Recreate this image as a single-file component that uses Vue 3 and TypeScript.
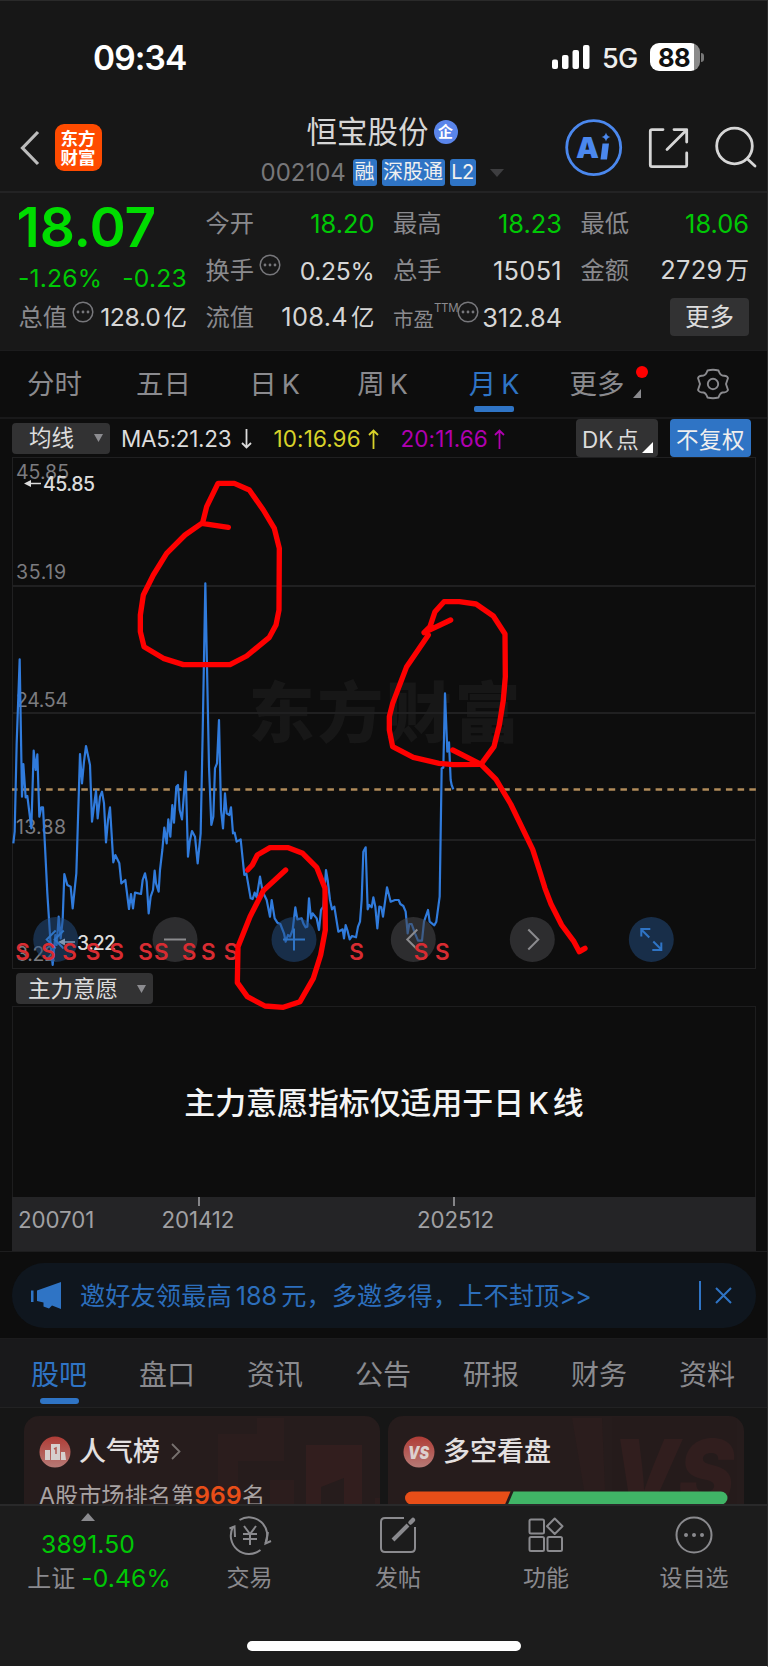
<script setup lang="ts">
interface Quote {
  label: string
  value: string
  unit?: string
  up?: boolean
  info?: boolean
  small?: boolean
  tight?: boolean
  sup?: string
}

const rows: Quote[][] = [
  [
    { label: '今开', value: '18.20', up: true },
    { label: '最高', value: '18.23', up: true },
    { label: '最低', value: '18.06', up: true },
  ],
  [
    { label: '换手', value: '0.25%', info: true, tight: true },
    { label: '总手', value: '15051' },
    { label: '金额', value: '2729', unit: '万' },
  ],
]
const lastRow: Quote[] = [
  { label: '总值', value: '128.0', unit: '亿', info: true, tight: true },
  { label: '流值', value: '108.4', unit: '亿' },
  { label: '市盈', value: '312.84', info: true, small: true, sup: 'TTM' },
]

const grid = [586, 713, 840]
const axis = [
  { v: '45.85', y: 479, w: 53 },
  { v: '35.19', y: 579, w: 50 },
  { v: '24.54', y: 707, w: 52 },
  { v: '13.88', y: 834, w: 50 },
  { v: '3.22', y: 961, w: 40 },
]

// Series and pen strokes use third-of-a-pixel units with the origin at y = 700.
const price =
  '40,430 44,395 50,130 59,-122 66,290 70,192 77,292 82,288 94,385 101,152 107,210 112,163 118,350 124,322 129,322 135,440 142,580 152,735 158,795 166,705 170,735 176,650 182,715 188,660 193,522 202,555 212,560 218,625 229,520 240,162 246,250 252,185 258,138 270,195 276,365 288,272 293,355 300,290 306,275 312,310 318,427 324,360 330,322 340,487 346,465 358,490 364,550 376,540 387,627 393,582 399,625 405,578 423,582 428,540 435,520 440,545 446,640 452,590 459,570 464,512 468,550 476,575 480,510 487,450 493,383 500,430 505,358 511,410 517,315 522,368 529,260 534,255 539,330 546,358 557,215 564,470 569,425 576,393 585,410 593,490 602,400 608,100 616,-350 627,200 634,375 640,350 645,205 651,190 657,60 663,330 669,385 675,280 680,340 688,345 693,322 699,400 704,398 710,425 722,418 733,525 739,520 752,595 758,597 764,578 770,592 780,530 788,575 800,600 810,650 815,600 824,655 832,668 841,672 852,700 857,725 864,705 870,710 878,690 886,622 892,658 905,655 910,670 917,682 922,680 927,595 933,655 938,640 950,655 957,690 963,630 970,620 978,510 983,540 990,600 996,628 1003,620 1015,695 1028,688 1032,715 1037,675 1042,690 1049,718 1056,708 1068,712 1074,680 1080,665 1085,600 1090,455 1097,442 1103,628 1108,615 1115,622 1120,592 1126,620 1132,685 1138,620 1144,622 1149,650 1161,562 1172,605 1185,600 1196,600 1201,612 1210,618 1217,635 1223,700 1228,672 1235,672 1245,700 1254,722 1266,722 1272,665 1284,630 1289,665 1303,676 1309,665 1319,590 1322,400 1325,205 1330,203 1335,-20 1342,155 1347,127 1352,240 1355,255 1360,268'

const strokes = [
  '685,-518 605,-530 555,-495 500,-440 460,-375 430,-315 421,-255 421,-205 432,-160 490,-125 550,-106 690,-106 740,-132 808,-188 828,-225 837,-270 838,-455 823,-515 790,-570 748,-630 703,-650 654,-650 620,-580 608,-532',
  '743,510 757,495 772,465 810,443 865,443 908,460 950,502 975,565 976,690 962,765 940,835 900,905 850,922 795,918 742,890 712,848 714,740 750,650 790,572 857,510',
  '1352,-240 1272,-202 1290,-220 1305,-265 1332,-295 1378,-295 1428,-288 1480,-252 1515,-198 1516,-70 1510,0 1498,75 1482,140 1443,193 1360,194 1317,190 1240,172 1178,140 1168,90 1168,50 1178,10 1220,-100 1285,-195',
  '1358,150 1443,193 1488,238 1532,312 1598,448 1618,510 1635,565 1653,612 1685,675 1722,725 1738,755 1755,745',
]

const sells = [68, 145, 209, 279, 350, 437, 484, 567, 625, 693, 1070, 1263, 1327].map((v) => v / 3)

const tools = [
  { x: 55.7, blue: true, d: 'M0-9L-9 0L0 9M8-9L-1 0L8 9' },
  { x: 175, blue: false, d: 'M-11 0H11' },
  { x: 294, blue: true, d: 'M-11 0H11M0-11V11' },
  { x: 413.3, blue: false, d: 'M4-10L-6 0L4 10' },
  { x: 532.3, blue: false, d: 'M-4-10L6 0L-4 10' },
  { x: 651.3, blue: true, d: 'M-2-2L-10-10M-10-3V-10.5H-1M2 2L10 10M10 3V10.5H1' },
]

const sections = ['股吧', '盘口', '资讯', '公告', '研报', '财务', '资料']
</script>

<template>
  <main class="page">
    <header class="top">
      <div class="status">
        <span class="time">09:34</span>
        <div class="status-right">
          <svg class="signal" width="40" height="26" viewBox="0 0 40 26" fill="#fff">
            <rect x="1" y="15.500" width="6" height="9.500" rx="2" />
            <rect x="11" y="11" width="6.500" height="14" rx="2" />
            <rect x="21.500" y="6" width="6.500" height="19" rx="2" />
            <rect x="32" y="1" width="6.500" height="24" rx="2" />
          </svg>
          <span class="net">5G</span>
          <span class="battery"><b>88</b></span>
          <i class="nub"></i>
        </div>
      </div>
      <div class="nav">
        <svg class="back" width="20" height="36" viewBox="0 0 20 36" fill="none" stroke="#bcbcbc" stroke-width="3.200">
          <path d="M18 2L2.500 18L18 34" />
        </svg>
        <div class="logo"><span>东方</span><span>财富</span></div>
        <div class="title">
          <div class="name">恒宝股份<i>企</i></div>
          <div class="code">
            <span class="num">002104</span>
            <em>融</em><em class="w3">深股通</em><em class="l2">L2</em>
            <svg width="14" height="8" viewBox="0 0 14 8"><path d="M0 0H14L7 8Z" fill="#3e3e40" /></svg>
          </div>
        </div>
        <svg class="actions" width="196" height="60" viewBox="564 118 196 60" fill="none">
          <circle cx="593.700" cy="147.600" r="27" stroke="#4b88ee" stroke-width="2.800" />
          <text x="576" y="158" class="ai" textLength="23" lengthAdjust="spacingAndGlyphs">A</text>
          <path d="M602.500 143.500H609L607 159.500H600.500Z" fill="#4b88ee" />
          <path d="M606 132.500Q606.800 136.200 610.500 137Q606.800 137.800 606 141.500Q605.200 137.800 601.500 137Q605.200 136.200 606 132.500Z" fill="#4b88ee" />
          <g stroke="#d6d6d6" stroke-width="2.800" stroke-linecap="round" stroke-linejoin="round">
            <path d="M663 129.600H652Q650.300 129.600 650.300 131.300V165Q650.300 166.600 652 166.600H685Q686.700 166.600 686.700 165V153" />
            <path d="M674 129.600H686.700V142M686 130.500L667 149.500" />
            <circle cx="734.500" cy="146" r="17.800" />
            <path d="M747.500 159L755 166" />
          </g>
        </svg>
      </div>
    </header>

    <section class="quote">
      <div class="headline">
        <strong>18.07</strong>
        <p><span>-1.26%</span><span>-0.23</span></p>
      </div>
      <template v-for="(row, r) in rows" :key="r">
        <div v-for="q in row" :key="q.label" class="cell">
          <span class="label">{{ q.label }}</span>
          <svg v-if="q.info" class="info" width="22" height="22" viewBox="-11 -11 22 22">
            <circle r="9.800" fill="none" stroke="#77777b" stroke-width="1.500" />
            <path d="M-5 0h.01M0 0h.01M5 0h.01" stroke="#77777b" stroke-width="2.800" stroke-linecap="round" />
          </svg>
          <span class="val" :class="{ up: q.up, tight: q.tight }">{{ q.value }}<i v-if="q.unit">{{ q.unit }}</i></span>
        </div>
      </template>
      <div v-for="q in lastRow" :key="q.label" class="cell" :class="{ small: q.small }">
        <span class="label">{{ q.label }}</span><sup v-if="q.sup">{{ q.sup }}</sup>
        <svg v-if="q.info" class="info" width="22" height="22" viewBox="-11 -11 22 22">
          <circle r="9.800" fill="none" stroke="#77777b" stroke-width="1.500" />
          <path d="M-5 0h.01M0 0h.01M5 0h.01" stroke="#77777b" stroke-width="2.800" stroke-linecap="round" />
        </svg>
        <span class="val" :class="{ tight: q.tight }">{{ q.value }}<i v-if="q.unit">{{ q.unit }}</i></span>
      </div>
      <div class="cell end"><button class="more">更多</button></div>
    </section>

    <nav class="periods">
      <span>分时</span><span>五日</span><span>日<b>K</b></span><span>周<b>K</b></span>
      <span class="on">月<b>K</b></span>
      <span>更多
        <svg class="badge" width="18" height="36" viewBox="0 0 18 36">
          <circle cx="11" cy="7" r="6" fill="#f00" /><path d="M10 24V33H2Z" fill="#8a8a8e" />
        </svg>
      </span>
      <span class="gear">
        <svg width="34" height="34" viewBox="-17 -17 34 34" fill="none" stroke="#8a8a8e" stroke-width="1.900">
          <path d="M-5.500-13.500Q0-15 5.500-13.500Q7-9 9.500-8.500Q14-8.500 15-6Q14-3 13 0Q14 3 15 6Q14 8.500 9.500 8.500Q7 9 5.500 13.500Q0 15-5.500 13.500Q-7 9-9.500 8.500Q-14 8.500-15 6Q-14 3-13 0Q-14-3-15-6Q-14-8.500-9.500-8.500Q-7-9-5.500-13.500Z" stroke-linejoin="round" />
          <circle r="5.200" />
        </svg>
      </span>
    </nav>

    <section class="ma">
      <button class="pick">均线<svg width="9" height="8" viewBox="0 0 9 8"><path d="M0 0H9L4.500 8Z" fill="#8c8c90" /></svg></button>
      <span class="m5">MA5:21.23<svg width="11" height="20" viewBox="0 0 11 20"><path d="M5.500 0V18.500M1 14L5.500 18.500L10 14" /></svg></span>
      <span class="m10">10:16.96<svg width="11" height="20" viewBox="0 0 11 20"><path d="M5.500 20V1.500M1 6L5.500 1.500L10 6" /></svg></span>
      <span class="m20">20:11.66<svg width="11" height="20" viewBox="0 0 11 20"><path d="M5.500 20V1.500M1 6L5.500 1.500L10 6" /></svg></span>
      <button class="dk">DK<b>点</b><svg width="11" height="11" viewBox="0 0 11 11"><path d="M11 0V11H0Z" fill="#fff" /></svg></button>
      <button class="adj">不复权</button>
    </section>

    <svg class="chart" width="768" height="512" viewBox="0 457 768 512">
      <text x="384.500" y="737" class="mark" text-anchor="middle" textLength="272">东方财富</text>
      <rect x="12.500" y="457.500" width="743" height="511" fill="none" stroke="#202021" />
      <path v-for="y in grid" :key="y" :d="`M12 ${y}H756`" stroke="#202021" stroke-width="2" />
      <g class="axis">
        <text v-for="a in axis" :key="a.v" x="16" :y="a.y" :textLength="a.w">{{ a.v }}</text>
      </g>
      <path d="M12 789.500H756" stroke="#b08b5a" stroke-width="2.600" stroke-dasharray="6.500 5.220" stroke-dashoffset="1" />
      <g transform="translate(0 700) scale(.33333)">
        <polyline :points="price" fill="none" stroke="#307bdc" stroke-width="6.600" stroke-linejoin="round" />
      </g>
      <g class="tag">
        <text x="43" y="490.500" textLength="52">45.85</text>
        <text x="77" y="950" textLength="39">3.22</text>
        <path d="M30 483.500H41M64 942H75" stroke="#dcdcdc" stroke-width="1.600" />
        <path d="M24 483.500L31 480V487ZM58 942L65 938.500V945.500Z" />
      </g>
      <g v-for="t in tools" :key="t.x" :transform="`translate(${t.x} 939.500)`" fill="none">
        <circle r="22.500" :fill="t.blue ? '#24508680' : '#47474a90'" />
        <path :d="t.d" :stroke="t.blue ? '#2f74c5' : '#8b8b8e'" stroke-width="2" />
      </g>
      <g class="sell">
        <text v-for="x in sells" :key="x" :x="x" y="959.500" text-anchor="middle">S</text>
      </g>
    </svg>

    <div class="indicator">
      <button class="pick wide">主力意愿<svg width="9" height="8" viewBox="0 0 9 8"><path d="M0 0H9L4.500 8Z" fill="#8c8c90" /></svg></button>
    </div>
    <div class="pane">主力意愿指标仅适用于日<b>K</b>线</div>
    <div class="dates"><span>200701</span><span class="tick">201412</span><span class="tick">202512</span></div>

    <div class="promo-wrap">
      <div class="promo">
        <svg width="31" height="28" viewBox="0 0 31 28" fill="#2f74c5">
          <path d="M0 8.500H2.500V20H0ZM6 8.500L30 0V27L21 23.500L18 26.500L12.500 24.500V20.500L6 19Z" />
        </svg>
        <span class="promo-text">邀好友领最高<b>188</b>元，多邀多得，上不封顶<u>&gt;&gt;</u></span>
        <i></i>
        <svg class="x" width="17" height="17" viewBox="0 0 17 17"><path d="M1 1L16 16M16 1L1 16" stroke="#2f74c5" stroke-width="2" /></svg>
      </div>
    </div>

    <nav class="sections">
      <span v-for="(s, i) in sections" :key="s" :class="{ on: i === 0 }">{{ s }}</span>
    </nav>

    <section class="cards">
      <article>
        <svg class="art" width="356" height="88" viewBox="24 1416 356 88" fill="#3a2020">
          <path d="M218 1434H257V1418H284V1461H238V1504H218ZM384 1418H400V1480H389Z" opacity=".25" />
          <path d="M306 1445H362V1504H344V1478L321 1487V1504H306Z" opacity=".6" /><path d="M270 1480H294V1504H270ZM375 1498H398V1504H375Z" opacity=".35" />
        </svg>
        <h3>
          <svg width="32" height="32" viewBox="0 0 32 32">
            <defs><linearGradient id="coin" x2="0" y2="1"><stop stop-color="#b03c36" /><stop offset="1" stop-color="#b67a76" /></linearGradient></defs>
            <circle cx="16" cy="16" r="15.500" fill="url(#coin)" />
            <path d="M6 14H11V24H6ZM12 8H21V24H12ZM22 16H26L27 24H22Z" fill="#d6cfce" /><path d="M15 13L17 12V18" fill="none" stroke="#b05a54" stroke-width="1.500" />
          </svg>
          人气榜
          <svg class="go" width="10" height="17" viewBox="0 0 10 17"><path d="M1 1L8.500 8.500L1 16" fill="none" stroke="#77716f" stroke-width="1.800" /></svg>
        </h3>
        <p>A股市场排名第<b>969</b>名</p>
      </article>
      <article>
        <svg class="art" width="356" height="88" viewBox="388 1416 356 88">
          <path d="M572 1418H602L605 1490H584Z" fill="#3a2020" opacity=".25" />
          <text x="612" y="1506" class="vs" textLength="122" lengthAdjust="spacingAndGlyphs">VS</text>
        </svg>
        <h3>
          <svg width="32" height="32" viewBox="0 0 32 32">
            <circle cx="16" cy="16" r="15.500" fill="url(#coin)" />
            <text x="5" y="23" class="vs-mini" textLength="21" lengthAdjust="spacingAndGlyphs">VS</text>
          </svg>
          多空看盘
        </h3>
        <svg class="ratio" width="324" height="14" viewBox="0 0 324 14">
          <path d="M6.500 .500H105.500L100 13.500H6.500A6.500 6.500 0 0 1 6.500 .500Z" fill="#e84e18" />
          <path d="M108.500 .500H316A6.500 6.500 0 0 1 316 13.500H103Z" fill="#40b466" />
        </svg>
      </article>
    </section>

    <footer class="bar">
      <div class="index">
        <svg width="14" height="8" viewBox="0 0 14 8"><path d="M7 0L14 8H0Z" fill="#8a8a8e" /></svg>
        <span class="pt">3891.50</span>
        <span class="chg"><i>上证</i>-0.46%</span>
      </div>
      <div class="act">
        <svg width="44" height="40" viewBox="-22 -20 44 40" fill="none" stroke="#8a8a8e" stroke-width="2">
          <path d="M-10.500-15A18.300 18.300 0 0 1 15.500 8.500M10.500 15A18.300 18.300 0 0 1-17-8" />
          <path d="M-20.500-6.500L-15.500-8.500L-15 2M21 6L15.500 8.500L18-3" />
          <path d="M-6-9L0-1L6-9M0-1V10M-7-1H7M-7 4H7" />
        </svg>交易
      </div>
      <div class="act">
        <svg width="40" height="40" viewBox="-20 -20 40 40" fill="none" stroke="#8a8a8e" stroke-width="2">
          <path d="M6-17H-13Q-17-17-17-13V13Q-17 17-13 17H13Q17 17 17 13V-8" />
          <path d="M-5 5L10-10" stroke-width="4" /><path d="M12.500-12.500L15-15" stroke-width="4.500" stroke-linecap="round" />
        </svg>发帖
      </div>
      <div class="act">
        <svg width="40" height="40" viewBox="-20 -20 40 40" fill="none" stroke="#8a8a8e" stroke-width="2">
          <rect x="-16.500" y="-15.500" width="14.500" height="14" rx="1.500" /><rect x="-16.500" y="2" width="14.500" height="14" rx="1.500" />
          <rect x="1.500" y="2" width="14.500" height="14" rx="1.500" /><path d="M8.700-16.500L16.500-8.700L8.700-1L1-8.700Z" stroke-linejoin="round" />
        </svg>功能
      </div>
      <div class="act">
        <svg width="40" height="40" viewBox="-20 -20 40 40" fill="none" stroke="#8a8a8e" stroke-width="2">
          <circle r="17.500" /><path d="M-8 0h.01M0 0h.01M8 0h.01" stroke-width="4" stroke-linecap="round" />
        </svg>设自选
      </div>
      <div class="home"></div>
    </footer>

    <svg class="pen" width="768" height="600" viewBox="0 450 768 600">
      <g transform="translate(0 700) scale(.33333)">
        <polyline v-for="s in strokes" :key="s" :points="s" />
      </g>
    </svg>
  </main>
</template>

<style>
body { margin: 0; background: #0d0d0d; }
</style>

<style scoped>
* { box-sizing: border-box; }
.page { position: relative; width: 768px; height: 1667px; overflow: hidden; background: #0d0d0d; color: #8a8a8e; font-family: Inter, "Noto Sans CJK SC", sans-serif; border-right: 1px solid #2c2c2c; border-bottom: 1px solid #fff; }
i, em { font-style: normal; }
b { font-weight: inherit; }
u { text-decoration: none; }
button { border: 0; padding: 0; font: inherit; color: #dcdcdc; background: #323233; border-radius: 4px; }
p, h3 { margin: 0; }
svg { flex: none; display: block; }

.top { height: 193px; background: #171717; border-top: 1px solid #2a2a2a; border-bottom: 2px solid #232324; }
.status { height: 112px; display: flex; justify-content: space-between; padding: 0 63px 0 93px; align-items: center; }
.time { color: #fff; font-size: 33.500px; font-weight: 600; letter-spacing: -.9px; line-height: 40px; margin-top: 1px; }
.status-right { display: flex; align-items: center; }
.net { width: 37px; margin-left: 11px; color: #eee; font-size: 27px; font-weight: 500; letter-spacing: -.6px; line-height: 30px; margin-top: 3px; }
.battery { margin-left: 11px; width: 50px; height: 28px; border-radius: 9px; background: linear-gradient(90deg, #fff 88%, #8a8a8a 88%); color: #111; display: flex; align-items: center; justify-content: center; font-size: 25.500px; font-weight: 700; letter-spacing: -.5px; padding-right: 2px; }
.nub { width: 3px; height: 9px; margin-left: 1px; background: #777; border-radius: 0 3px 3px 0; }
.nav { height: 78px; display: flex; align-items: flex-start; padding-left: 20px; }
.back { margin-top: 17px; }
.logo { margin: 11px 0 0 14.500px; width: 47px; height: 47px; border-radius: 9px; background: #ff4b00; color: #fff; display: flex; flex-direction: column; align-items: center; justify-content: center; font-size: 17.500px; line-height: 19px; font-weight: 700; }
.title { margin-left: 159px; width: 286px; display: flex; flex-direction: column; }
.name { height: 37px; margin-left: 46px; display: flex; align-items: center; color: #d6d6d6; font-size: 30.500px; line-height: 36px; white-space: nowrap; }
.name i { width: 24px; height: 24px; margin-left: 5px; border-radius: 50%; background: #5a85ea; color: #fff; font-size: 15px; line-height: 23px; text-align: center; font-weight: 700; }
.code { display: flex; align-items: center; height: 37px; margin-top: 4px; }
.code .num { width: 92px; font-size: 24px; color: #77777a; letter-spacing: 0; }
.code em { height: 27px; width: 24px; border-radius: 3px; background: #2f74c5; color: #f0f0f0; font-size: 20px; line-height: 26px; text-align: center; margin-right: 5px; }
.code .w3 { width: 63px; }
.code .l2 { width: 26px; margin-right: 14px; letter-spacing: -.5px; }
.actions { margin: 5px 0 0 17.500px; }
.ai { font: 900 29px "Inter"; fill: #4b88ee; }

.quote { height: 157px; padding: 6.500px 0 0 19px; background: #181818; display: grid; grid-template-columns: 168px 168.500px 168.500px 168px; grid-auto-rows: 47px; column-gap: 19px; align-content: start; }
.headline { grid-row: 1 / span 2; color: #00c805; display: flex; flex-direction: column; }
.headline strong { color: #00dc00; font-size: 55px; line-height: 54px; font-weight: 600; letter-spacing: -.1px; margin-left: -2.500px; }
.headline p { display: flex; justify-content: space-between; font-size: 24.700px; line-height: 30px; margin-top: 9px; letter-spacing: .2px; margin-left: -1px; }
.cell { display: flex; align-items: center; height: 47px; white-space: nowrap; }
.label { font-size: 24.300px; line-height: 34px; margin-left: -.500px; }
.info { margin: -10px 0 0 5px; }
.val { margin-left: auto; font-size: 25.400px; color: #d6d6d6; line-height: 34px; letter-spacing: .3px; margin-top: 1px; }
.val i { font-size: 23.500px; margin-left: 3px; letter-spacing: 0; }
.val.tight { font-size: 24.700px; letter-spacing: -.3px; }
.val.up { color: #00c805; letter-spacing: 0; }
.small .label { font-size: 20.500px; margin-top: 6px; }
.small sup { font-size: 11.500px; line-height: 12px; margin-top: -19px; letter-spacing: -.3px; }
.small .info { margin-left: -1px; }
.small .val { letter-spacing: -.1px; }
.end { justify-content: flex-end; padding-right: 0; }
.more { width: 79px; height: 38px; font-size: 24.500px; line-height: 36px; }

.periods { height: 69px; border-top: 1px solid #1c1c1d; border-bottom: 2px solid #19191a; display: grid; grid-template-columns: 109px 109px 113px 103px 120px 86px 126px; align-items: center; font-size: 27.500px; line-height: 66px; text-align: center; padding-bottom: 0; }
.periods span { position: relative; height: 66px; white-space: nowrap; }
.periods b { margin-left: 5px; font-size: 27px; }
.periods .on { color: #2f74c5; }
.periods .on::after { content: ""; position: absolute; left: 40px; bottom: 5px; width: 40px; height: 6px; border-radius: 2px; background: #2f74c5; }
.badge { position: absolute; right: -9px; top: 14px; }
.gear { display: flex; align-items: center; justify-content: center; padding-left: 20px; }
.gear svg { margin-left: 0; margin-right: 0; }

.ma { height: 38px; display: flex; align-items: center; padding: 0 16px 0 12px; font-size: 22.500px; letter-spacing: -.3px; white-space: nowrap; }
.ma span { display: flex; align-items: center; justify-content: space-between; line-height: 30px; margin-top: 1px; }
.ma span svg { fill: none; stroke: currentColor; stroke-width: 1.800; }
.pick { width: 98px; height: 31px; display: flex; align-items: center; justify-content: space-between; padding: 0 7px 0 17px; font-size: 22.500px; letter-spacing: 0; line-height: 30px; }
.m5 { color: #dcdcdc; width: 131px; margin-left: 11px; }
.ma .m10 { color: #d8d22a; width: 105px; margin-left: 21.500px; letter-spacing: .1px; }
.ma .m20 { color: #b000b0; width: 104px; margin-left: 22px; letter-spacing: .1px; }
.dk { position: relative; width: 82px; height: 38px; margin-left: auto; text-align: left; padding-left: 6px; }
.dk b { margin-left: 3px; }
.dk svg { position: absolute; right: 5px; bottom: 4px; }
.adj { width: 81px; height: 38px; margin-left: 12px; background: #2f74c5; color: #eee; letter-spacing: .5px; }

.chart { margin-right: -1px; }
.mark { font: 900 66px "Noto Sans CJK SC"; fill: #171717; }
.axis { font-size: 19.500px; fill: #7c7c80; }
.tag { font-size: 19.500px; fill: #dcdcdc; font-weight: 500; }
.sell { font-size: 22.500px; fill: #d82c32; font-weight: 600; }
.indicator { height: 37px; padding: 4px 0 0 16px; }
.pick.wide { width: 137px; padding-left: 12px; }
.pane { width: 744px; height: 191px; margin-left: 12px; border: 1px solid #1d1d1e; border-bottom: 0; color: #f4f4f4; font-weight: 500; font-size: 30.900px; line-height: 192px; text-align: center; white-space: nowrap; }
.pane b { margin: 0 4px; font-size: 30px; }
.dates { width: 744px; height: 54px; margin-left: 12px; background: #242426; color: #a0a0a3; font-size: 22.300px; letter-spacing: -.1px; line-height: 46px; display: grid; grid-template-columns: 143.500px 255.500px 100px; padding-left: 6px; }
.tick { position: relative; }
.tick::before { content: ""; position: absolute; left: 36px; top: 0; width: 2px; height: 9px; background: #858588; }

.promo-wrap { height: 88px; border-top: 1px solid #1d1d1e; padding: 11px 0 0 12px; border-bottom: 1px solid #1c1c1d; }
.promo { width: 744px; height: 65px; border-radius: 33px; background: #0f161e; color: #2c6ebc; display: flex; align-items: center; padding: 0 24px 0 19px; }
.promo-text { width: 615px; margin-left: 18px; font-size: 25.200px; line-height: 36px; white-space: nowrap; letter-spacing: .1px; }
.promo-text b { margin: 0 4px; letter-spacing: 0; }
.promo-text u { letter-spacing: -1px; }
.promo i { width: 2px; height: 29px; background: #2f74c5; margin-left: 4px; }
.promo .x { margin-left: auto; }

.sections { height: 69px; background: #19191b; border-bottom: 1px solid #222223; display: grid; grid-template-columns: repeat(7, 108px); padding-left: 5px; text-align: center; font-size: 28px; line-height: 72px; }
.sections span { position: relative; height: 69px; }
.sections .on { color: #2f74c5; }
.sections .on::after { content: ""; position: absolute; left: 35px; bottom: 4px; width: 39px; height: 6px; border-radius: 3px; background: #2f74c5; }

.cards { height: 96px; padding: 8px 0 0 24px; display: flex; gap: 8.500px; background: #161616; }
article { position: relative; width: 355.500px; height: 88px; border-radius: 15px 15px 0 0; background: #261c1c; overflow: hidden; padding-left: 15px; }
.art { position: absolute; inset: 0; }
h3 { position: relative; height: 37px; margin-top: 17px; display: flex; align-items: center; gap: 8px; color: #e4e0e0; font-size: 27px; line-height: 36px; font-weight: 500; white-space: nowrap; }
.go { margin-left: 3px; }
article p { position: relative; font-size: 23.200px; line-height: 34px; margin-top: 8px; color: #a8a2a2; white-space: nowrap; }
article p b { color: #e84e18; font-weight: 600; font-size: 24.500px; letter-spacing: .3px; }
.ratio { position: relative; margin: 21px 0 0 2px; }
.vs { font: italic 900 92px Inter; fill: #3a2020; opacity: .6; }
.vs-mini { font: italic 900 17px Inter; fill: #ddd0ce; }

.bar { position: relative; height: 163px; background: #1c1c1c; border-top: 2px solid #29292a; display: grid; grid-template-columns: 176px 147px 150px 146px 150px; }
.index { display: flex; flex-direction: column; align-items: center; padding-top: 7px; color: #00c805; font-size: 24.700px; letter-spacing: .1px; }
.pt { line-height: 30px; margin-top: 8px; }
.chg { line-height: 34px; margin: 2px 0 0 22px; white-space: nowrap; }
.chg i { color: #8a8a8e; font-size: 24px; margin-right: 6px; letter-spacing: 0; }
.act { display: flex; flex-direction: column; align-items: center; padding-top: 9px; font-size: 23px; line-height: 34px; gap: 6px; }
.home { position: absolute; left: 247px; top: 135px; width: 274px; height: 10px; border-radius: 5px; background: #fff; }
.pen { position: absolute; left: 0; top: 450px; pointer-events: none; }
.pen polyline { fill: none; stroke: #fe0000; stroke-width: 16; stroke-linecap: round; stroke-linejoin: round; }
</style>
